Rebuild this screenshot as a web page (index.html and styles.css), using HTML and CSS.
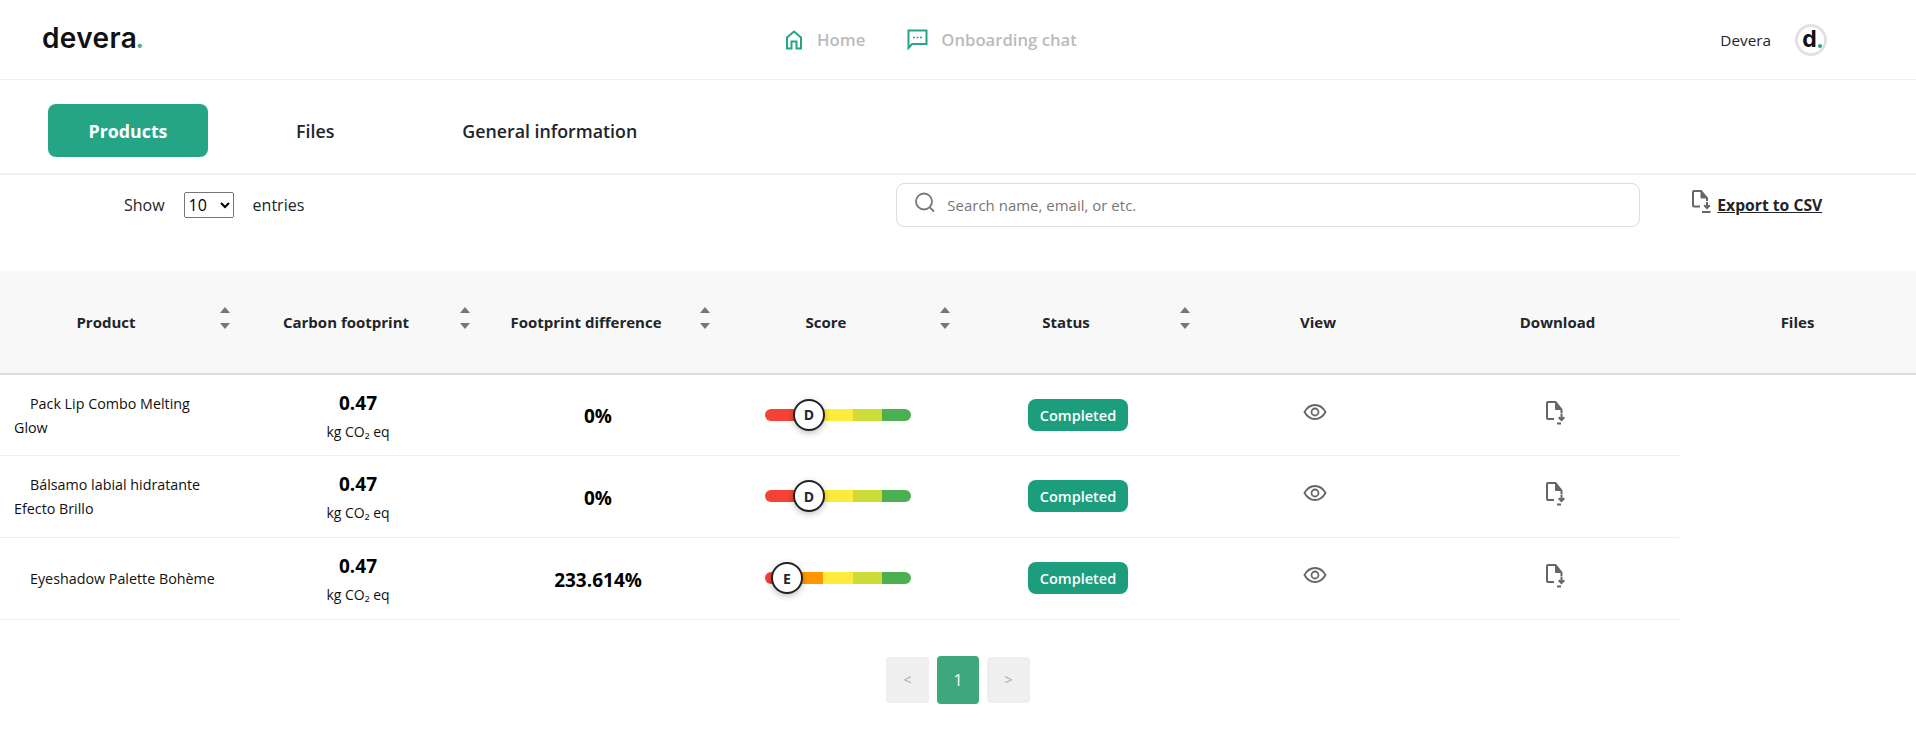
FILE: index.html
```html
<!DOCTYPE html>
<html lang="en">
<head>
  <meta charset="UTF-8">
  <meta name="viewport" content="width=device-width, initial-scale=1.0">
  <title>Devera</title>
  <link rel="stylesheet" href="styles.css">
</head>
<body>
  <header class="topbar">
    <a class="logo">devera<span class="logo-dot">.</span></a>
    <nav class="mainnav">
      <a class="navlink">
        <svg class="navicon" width="18" height="20" viewBox="0 0 18 20" fill="none" stroke="#25a586" stroke-width="2"><path d="M2 18.500V7.500L9 1.500l7 6v11h-4.500v-7h-5v7z"/></svg>
        Home
      </a>
      <a class="navlink navlink-chat">
        <svg class="navicon" width="21" height="21" viewBox="0 0 21 21" fill="none" stroke="#25a586" stroke-width="2"><path d="M1.500 19V1.500h18v13.500H5z"/><path d="M6 8.500h2M9.500 8.500h2M13 8.500h2" stroke-width="1.600"/></svg>
        Onboarding chat
      </a>
    </nav>
    <div class="usermenu">
      <span class="username">Devera</span>
      <span class="avatar">d<span class="avatar-dot"></span></span>
    </div>
  </header>

  <div class="tabs">
    <a class="tab tab-active">Products</a>
    <a class="tab">Files</a>
    <a class="tab">General information</a>
  </div>

  <div class="toolbar">
    <label class="entries">
      <span>Show</span>
      <select class="entries-select"><option>10</option><option>25</option><option>50</option></select>
      <span>entries</span>
    </label>
    <div class="search">
      <svg width="22" height="22" viewBox="0 0 22 22" fill="none" stroke="#777" stroke-width="1.800"><circle cx="10" cy="9.500" r="8"/><path d="M15.800 15.300l4.200 4.200"/></svg>
      <input class="search-input" type="text" placeholder="Search name, email, or etc.">
    </div>
    <a class="export">
      <svg width="19" height="23" viewBox="0 0 19 23" fill="none" stroke="#666" stroke-width="2"><path d="M8 16.500H2a1 1 0 0 1-1-1V2a1 1 0 0 1 1-1h7l6 7v3"/><path d="M9 1.500V8h5.500z" fill="#666" stroke-width="1"/><path d="M15 12v6M12.200 15.200l2.800 2.800 2.800-2.800M10 22h8.500"/></svg>
      <span>Export to CSV</span>
    </a>
  </div>

  <table class="products">
    <colgroup>
      <col class="col"><col class="col"><col class="col"><col class="col"><col class="col"><col class="col"><col class="col-last"><col>
    </colgroup>
    <thead>
      <tr>
        <th class="sortable">Product</th>
        <th class="sortable">Carbon footprint</th>
        <th class="sortable">Footprint difference</th>
        <th class="sortable">Score</th>
        <th class="sortable">Status</th>
        <th class="plain">View</th>
        <th class="plain">Download</th>
        <th>Files</th>
      </tr>
    </thead>
    <tbody>
      <tr>
        <td class="name">Pack Lip Combo Melting Glow</td>
        <td class="footprint"><div class="co2">0.47</div><div class="unit">kg CO₂ eq</div></td>
        <td class="diff">0%</td>
        <td><div class="score"><i></i><i></i><i></i><i></i><i></i><span class="knob knob-d">D</span></div></td>
        <td><span class="badge">Completed</span></td>
        <td class="action"><svg class="eye" width="24" height="16" viewBox="0 0 24 16" fill="none" stroke="#666" stroke-width="1.800"><path d="M1.500 8C4 3.500 7.500 1 12 1s8 2.500 10.500 7c-2.500 4.500-6 7-10.500 7S4 12.500 1.500 8z"/><circle cx="12" cy="8" r="3.500"/></svg></td>
        <td class="action"><svg class="file" width="20" height="24" viewBox="0 0 20 24" fill="none" stroke="#666" stroke-width="2"><path d="M8 18H2a1 1 0 0 1-1-1V2a1 1 0 0 1 1-1h7.500l6 7.500V12"/><path d="M9.500 1.500V8.500h5.500z" fill="#666" stroke-width="1"/><path d="M15.500 12.500v6.500M12.700 16.200l2.800 2.800 2.800-2.800M11 22.500h4"/></svg></td>
      </tr>
      <tr>
        <td class="name">Bálsamo labial hidratante Efecto Brillo</td>
        <td class="footprint"><div class="co2">0.47</div><div class="unit">kg CO₂ eq</div></td>
        <td class="diff">0%</td>
        <td><div class="score"><i></i><i></i><i></i><i></i><i></i><span class="knob knob-d">D</span></div></td>
        <td><span class="badge">Completed</span></td>
        <td class="action"><svg class="eye" width="24" height="16" viewBox="0 0 24 16" fill="none" stroke="#666" stroke-width="1.800"><path d="M1.500 8C4 3.500 7.500 1 12 1s8 2.500 10.500 7c-2.500 4.500-6 7-10.500 7S4 12.500 1.500 8z"/><circle cx="12" cy="8" r="3.500"/></svg></td>
        <td class="action"><svg class="file" width="20" height="24" viewBox="0 0 20 24" fill="none" stroke="#666" stroke-width="2"><path d="M8 18H2a1 1 0 0 1-1-1V2a1 1 0 0 1 1-1h7.500l6 7.500V12"/><path d="M9.500 1.500V8.500h5.500z" fill="#666" stroke-width="1"/><path d="M15.500 12.500v6.500M12.700 16.200l2.800 2.800 2.800-2.800M11 22.500h4"/></svg></td>
      </tr>
      <tr>
        <td class="name">Eyeshadow Palette Bohème</td>
        <td class="footprint"><div class="co2">0.47</div><div class="unit">kg CO₂ eq</div></td>
        <td class="diff">233.614%</td>
        <td><div class="score"><i></i><i></i><i></i><i></i><i></i><span class="knob knob-e">E</span></div></td>
        <td><span class="badge">Completed</span></td>
        <td class="action"><svg class="eye" width="24" height="16" viewBox="0 0 24 16" fill="none" stroke="#666" stroke-width="1.800"><path d="M1.500 8C4 3.500 7.500 1 12 1s8 2.500 10.500 7c-2.500 4.500-6 7-10.500 7S4 12.500 1.500 8z"/><circle cx="12" cy="8" r="3.500"/></svg></td>
        <td class="action"><svg class="file" width="20" height="24" viewBox="0 0 20 24" fill="none" stroke="#666" stroke-width="2"><path d="M8 18H2a1 1 0 0 1-1-1V2a1 1 0 0 1 1-1h7.500l6 7.500V12"/><path d="M9.500 1.500V8.500h5.500z" fill="#666" stroke-width="1"/><path d="M15.500 12.500v6.500M12.700 16.200l2.800 2.800 2.800-2.800M11 22.500h4"/></svg></td>
      </tr>
    </tbody>
  </table>

  <div class="pager">
    <a class="page">&lt;</a>
    <a class="page page-current">1</a>
    <a class="page">&gt;</a>
  </div>
</body>
</html>
```

FILE: styles.css
```css
body {
  margin: 0;
  background: #fff;
  color: #212529;
  font-family: "Open Sans", "Noto Sans", sans-serif;
  font-size: 15px;
}

a {
  color: inherit;
  text-decoration: none;
}

/* top bar */
.topbar {
  display: flex;
  align-items: center;
  height: 79px;
  padding-left: 42px;
  border-bottom: 1px solid #eee;
}
.logo {
  width: 101px;
  margin-top: -4px;
  font-family: "Inter", sans-serif;
  font-size: 28px;
  font-weight: 600;
  letter-spacing: 0.4px;
  color: #111;
}
.logo-dot {
  margin-left: -2px;
  color: #5aa98f;
}
.mainnav {
  display: flex;
  align-items: center;
  margin-left: 642px;
}
.navlink {
  display: flex;
  align-items: center;
  gap: 14px;
  color: #bbb;
  font-size: 16.700px;
  font-weight: 600;
}
.navlink-chat {
  margin-left: 42px;
  gap: 13px;
}
.usermenu {
  display: flex;
  align-items: center;
  margin-left: auto;
  margin-right: 89px;
  gap: 24px;
}
.username {
  font-size: 15.300px;
  font-weight: 500;
}
.avatar {
  position: relative;
  display: flex;
  align-items: center;
  justify-content: center;
  box-sizing: border-box;
  width: 32px;
  height: 32px;
  padding-right: 3px;
  border: 3px solid #e2e2e2;
  border-radius: 50%;
  font-family: "Inter", sans-serif;
  font-size: 23px;
  font-weight: 700;
  line-height: 1;
  color: #111;
}
.avatar-dot {
  position: absolute;
  right: 2px;
  bottom: 5px;
  width: 4px;
  height: 4px;
  border-radius: 50%;
  background: #25a586;
}

/* tabs */
.tabs {
  display: flex;
  gap: 48px;
  height: 95px;
  box-sizing: border-box;
  padding: 24px 0 0 48px;
  border-bottom: 2px solid #f2f2f2;
}
.tab {
  display: flex;
  align-items: center;
  height: 53px;
  padding: 0 40px;
  border-radius: 8px;
  font-size: 17.800px;
  font-weight: 600;
}
.tab-active {
  justify-content: center;
  box-sizing: border-box;
  width: 160px;
  background: #25a586;
  color: #fff;
  font-weight: 700;
}

/* show entries / search / export */
.toolbar {
  display: flex;
  align-items: flex-start;
  height: 96px;
  padding-top: 8px;
  box-sizing: border-box;
}
.entries {
  display: flex;
  align-items: center;
  gap: 19px;
  height: 44px;
  margin-left: 124px;
  font-size: 16px;
}
.entries-select {
  width: 50px;
  height: 26px;
  font-family: inherit;
  font-size: 16px;
}
.search {
  display: flex;
  align-items: center;
  gap: 9px;
  box-sizing: border-box;
  width: 744px;
  height: 44px;
  margin-left: 592px;
  padding: 0 0 0 17px;
  border: 1px solid #ddd;
  border-radius: 8px;
}
.search svg {
  margin-top: -5px;
}
.search-input {
  flex: 1;
  border: none;
  outline: none;
  font-family: inherit;
  font-size: 15px;
}
.search-input::placeholder {
  color: #777;
}
.export {
  display: flex;
  align-items: center;
  gap: 6px;
  height: 44px;
  margin-left: 52px;
  font-size: 15.700px;
  font-weight: 700;
  text-decoration: underline;
}
.export svg {
  margin-top: -7px;
}

/* table */
.products {
  width: 100%;
  table-layout: fixed;
  border-collapse: collapse;
}
.col {
  width: 240px;
}
.col-last {
  width: 239px;
}
.products th {
  position: relative;
  height: 102px;
  padding: 0;
  background: #f8f8f8;
  border-bottom: 2px solid #ddd;
  font-size: 15px;
  font-weight: 700;
}
.products th.plain {
  padding-right: 4px;
}
.sortable {
  padding-right: 28px !important;
}
.sortable::before,
.sortable::after {
  content: "";
  position: absolute;
  right: 10px;
  border-left: 5px solid transparent;
  border-right: 5px solid transparent;
}
.sortable::before {
  top: 36px;
  border-bottom: 6px solid #777;
}
.sortable::after {
  top: 52px;
  border-top: 6px solid #777;
}
.products td {
  box-sizing: border-box;
  height: 82px;
  padding: 0;
  text-align: center;
  border-bottom: 1px solid #eee;
}
.products tbody tr:first-child td {
  height: 81px;
}
.products td.name {
  padding: 2px 20px 0 14px;
  text-align: left;
  text-indent: 16px;
  font-size: 14.300px;
  line-height: 24px;
  color: #111;
}
.products td.footprint {
  padding-right: 4px;
}
.co2 {
  margin-top: 2px;
  font-size: 19px;
  font-weight: 700;
  line-height: 24px;
  color: #000;
}
.unit {
  margin-top: 8px;
  font-size: 14px;
  line-height: 18px;
  color: #111;
}
.products td.diff {
  padding: 3px 4px 0 0;
  font-size: 19px;
  font-weight: 700;
  color: #000;
}
.score {
  position: relative;
  display: flex;
  width: 146px;
  height: 12px;
  margin-left: 45px;
}
.score i {
  flex: 1;
}
.score i:nth-child(1) { background: #f44336; border-radius: 6px 0 0 6px; }
.score i:nth-child(2) { background: #ff9800; }
.score i:nth-child(3) { background: #ffeb3b; }
.score i:nth-child(4) { background: #cddc39; }
.score i:nth-child(5) { background: #4caf50; border-radius: 0 6px 6px 0; }
.knob {
  position: absolute;
  top: -10px;
  display: flex;
  align-items: center;
  justify-content: center;
  box-sizing: border-box;
  width: 32px;
  height: 32px;
  background: #fff;
  border: 2px solid #222;
  border-radius: 50%;
  box-shadow: 0 2px 6px rgba(0, 0, 0, 0.25);
  font-size: 14px;
  font-weight: 700;
}
.knob-d { left: 28px; }
.knob-e { left: 6px; }
.badge {
  display: inline-block;
  width: 100px;
  height: 32px;
  margin-right: 4px;
  background: #1c9d7d;
  border-radius: 8px;
  color: #fff;
  font-size: 14.500px;
  font-weight: 600;
  line-height: 33px;
}
.eye {
  display: block;
  margin: -6px 0 0 103px;
}
.file {
  display: block;
  margin: -4px 0 0 106px;
}

/* pagination */
.pager {
  display: flex;
  justify-content: center;
  align-items: center;
  gap: 8px;
  margin-top: 36px;
}
.page {
  display: flex;
  align-items: center;
  justify-content: center;
  width: 43px;
  height: 46px;
  background: #efefef;
  border-radius: 4px;
  color: #aaa;
  font-size: 14px;
}
.page-current {
  width: 42px;
  height: 48px;
  background: #3fa77c;
  color: #fff;
  font-size: 16px;
}
```
